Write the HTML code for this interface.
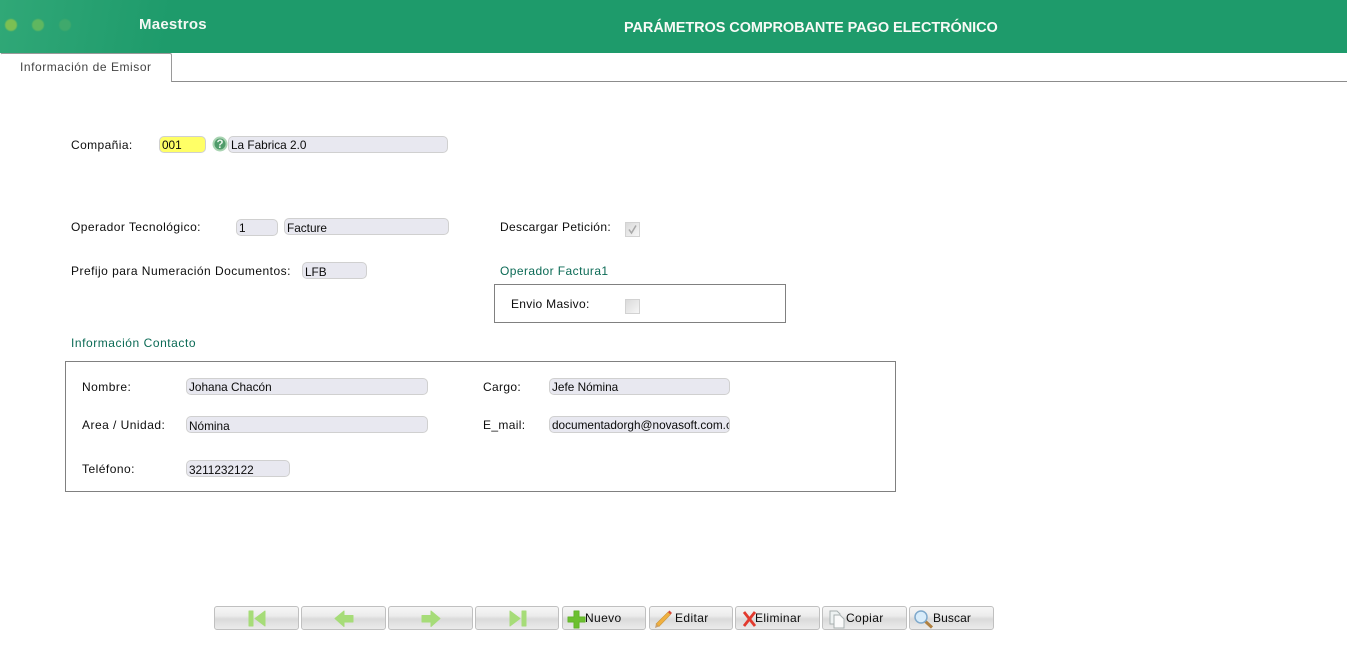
<!DOCTYPE html>
<html lang="es"><head><meta charset="utf-8"><title>Parámetros</title>
<style>
html,body{margin:0;padding:0;width:1347px;height:646px;overflow:hidden;background:#fff;font-family:"Liberation Sans",sans-serif}
.a{position:absolute;white-space:nowrap}
#hd{left:0;top:0;width:1347px;height:53px;background:linear-gradient(100deg,#30a877 0,#2aa373 60px,#1e9b6b 170px,#1e9b6b 100%);overflow:hidden}
.dot{position:absolute;border-radius:50%;filter:blur(.6px)}
.l{font-size:12px;letter-spacing:.47px;color:#0d0d0d;line-height:14px}
.g{font-size:12px;letter-spacing:.45px;color:#0b6a55;line-height:14px}
.i{box-sizing:border-box;height:17px;background:#e8e8f0;border:1px solid #d0d0d0;border-radius:5px;font-size:11.8px;line-height:16px;padding-left:2px;color:#0a0a0a;overflow:hidden}
.box{box-sizing:border-box;border:1px solid #808080}
.cb{box-sizing:border-box;width:15px;height:15px;background:linear-gradient(135deg,#dadada,#f6f6f6);border:1px solid #d2d2d2}
.b{box-sizing:border-box;top:606px;height:24px;border:1px solid #c0c0c0;border-radius:3px;background:linear-gradient(#f6f6f6 0,#ececec 40%,#dadada 55%,#ebebeb 100%);font-size:12px;letter-spacing:.38px;line-height:23px;color:#0d0d0d}
.b svg{position:absolute;left:0;top:0}
.b span{position:absolute;top:0}
</style></head><body>
<div class="a" id="hd">
<div class="dot" style="left:5px;top:19px;width:12px;height:12px;background:#7cbf53"></div>
<div class="dot" style="left:32px;top:19px;width:12px;height:12px;background:#5fb760"></div>
<div class="dot" style="left:59px;top:19px;width:12px;height:12px;background:#3fa96c"></div>
<div class="a" style="left:139px;top:16px;font-size:15px;font-weight:bold;color:#f4f8f4;line-height:17px;letter-spacing:.25px">Maestros</div>
<div class="a" style="left:624px;top:19px;font-size:14.5px;font-weight:bold;color:#f8faf6;line-height:18px;letter-spacing:-.07px">PARÁMETROS COMPROBANTE PAGO ELECTRÓNICO</div>
</div>
<div class="a" style="left:0;top:81px;width:1347px;height:1px;background:#8c8c8c"></div>
<div class="a" style="left:0;top:53px;width:172px;height:29px;box-sizing:border-box;background:#fff;border:1px solid #9a9a9a;border-width:1px 1px 0 1px;border-left-color:#fff;border-radius:2px 2px 0 0;font-size:12px;letter-spacing:.55px;line-height:27px;padding-left:19px;color:#444">Información de Emisor</div>

<div class="a l" style="left:71px;top:138px;letter-spacing:.4px">Compañia:</div>
<div class="a i" style="left:159px;top:136px;width:47px;background:#ffff66;padding-left:2px">001</div>
<svg class="a" style="left:212px;top:136px" width="16" height="16" viewBox="0 0 16 16"><circle cx="8" cy="8" r="7.500" fill="#a9d4b2"/><circle cx="8" cy="8" r="5.500" fill="#4f9b6a"/><text x="8" y="12" font-size="11.500" font-weight="bold" text-anchor="middle" fill="#e8f4ea" font-family="Liberation Sans">?</text></svg>
<div class="a i" style="left:228px;top:136px;width:220px">La Fabrica 2.0</div>

<div class="a l" style="left:71px;top:220px;letter-spacing:.45px">Operador Tecnológico:</div>
<div class="a i" style="left:236px;top:219px;width:42px">1</div>
<div class="a i" style="left:284px;top:218px;width:165px;height:17px;line-height:18px">Facture</div>
<div class="a l" style="left:71px;top:264px">Prefijo para Numeración Documentos:</div>
<div class="a i" style="left:302px;top:262px;width:65px;line-height:18px">LFB</div>

<div class="a l" style="left:500px;top:220px;letter-spacing:.33px">Descargar Petición:</div>
<div class="a cb" style="left:625px;top:222px"><svg width="13" height="13" viewBox="0 0 13 13" style="display:block"><path d="M3 6.500L5.500 10L10 2.500" fill="none" stroke="#a8a8a8" stroke-width="1.500"/></svg></div>
<div class="a g" style="left:500px;top:264px;letter-spacing:.42px">Operador Factura1</div>
<div class="a box" style="left:494px;top:284px;width:292px;height:39px"></div>
<div class="a l" style="left:511px;top:297px;letter-spacing:.3px">Envio Masivo:</div>
<div class="a cb" style="left:625px;top:299px"></div>

<div class="a g" style="left:71px;top:336px;letter-spacing:.55px">Información Contacto</div>
<div class="a box" style="left:65px;top:361px;width:831px;height:131px"></div>
<div class="a l" style="left:82px;top:380px">Nombre:</div>
<div class="a i" style="left:186px;top:378px;width:242px">Johana Chacón</div>
<div class="a l" style="left:82px;top:418px">Area / Unidad:</div>
<div class="a i" style="left:186px;top:416px;width:242px;line-height:18px">Nómina</div>
<div class="a l" style="left:82px;top:462px">Teléfono:</div>
<div class="a i" style="left:186px;top:460px;width:104px;line-height:18px">3211232122</div>
<div class="a l" style="left:483px;top:380px;letter-spacing:.35px">Cargo:</div>
<div class="a i" style="left:549px;top:378px;width:181px">Jefe Nómina</div>
<div class="a l" style="left:483px;top:418px;letter-spacing:.35px">E_mail:</div>
<div class="a i" style="left:549px;top:416px;width:181px;padding-right:0">documentadorgh@novasoft.com.co</div>

<div class="a b" style="left:214px;width:85px"><svg width="85" height="24"><path d="M34 4h4v15h-4zM50 4v15l-10-7.500z" fill="#a6dc78" stroke="#a6dc78" stroke-width="1" stroke-linejoin="round"/></svg></div>
<div class="a b" style="left:301px;width:85px"><svg width="85" height="24"><path d="M33 11.500L42 4v4.500h9v6.500h-9v4.500z" fill="#a6dc78" stroke="#a6dc78" stroke-width="1" stroke-linejoin="round"/></svg></div>
<div class="a b" style="left:388px;width:85px"><svg width="85" height="24"><path d="M51 11.500L42 4v4.500h-9v6.500h9v4.500z" fill="#a6dc78" stroke="#a6dc78" stroke-width="1" stroke-linejoin="round"/></svg></div>
<div class="a b" style="left:475px;width:84px"><svg width="84" height="24"><path d="M46 4h4v15h-4zM34 4v15l10-7.500z" fill="#a6dc78" stroke="#a6dc78" stroke-width="1" stroke-linejoin="round"/></svg></div>
<div class="a b" style="left:562px;width:84px"><svg width="84" height="24"><path d="M11 4h5v6h6v5h-6v6h-5v-6H5v-5h6z" fill="#6cc02f" stroke="#62b42a" stroke-width="1" stroke-linejoin="round"/></svg><span style="left:22px">Nuevo</span></div>
<div class="a b" style="left:649px;width:84px"><svg width="84" height="24"><path d="M6 17L18 5l2.500 2.500L9 19.500z" fill="#f0b040" stroke="#c9963f" stroke-width=".6"/><path d="M18 5l1.500-1.500 2.500 2.500-1.500 1.500z" fill="#d84a3a"/><path d="M5 21l1-4 3 2.500z" fill="#c9a070"/></svg><span style="left:25px">Editar</span></div>
<div class="a b" style="left:735px;width:85px"><svg width="85" height="24"><path d="M8 5L19 19M19 5L8 19" fill="none" stroke="#e23a2e" stroke-width="2.800"/></svg><span style="left:19px">Eliminar</span></div>
<div class="a b" style="left:822px;width:85px"><svg width="85" height="24"><path d="M7 4h7l3 3v10H7z" fill="#eef2f2" stroke="#a8b0b0"/><path d="M11 8h6l4 4v9H11z" fill="#fafafa" stroke="#a8b0b0"/></svg><span style="left:23px">Copiar</span></div>
<div class="a b" style="left:909px;width:85px"><svg width="85" height="24"><path d="M15.500 14.500L22 20.500" stroke="#b08040" stroke-width="3"/><circle cx="11" cy="10" r="6" fill="#d8ecfa" stroke="#7fa9cc" stroke-width="1.500"/></svg><span style="left:23px;letter-spacing:.1px">Buscar</span></div>
</body></html>
